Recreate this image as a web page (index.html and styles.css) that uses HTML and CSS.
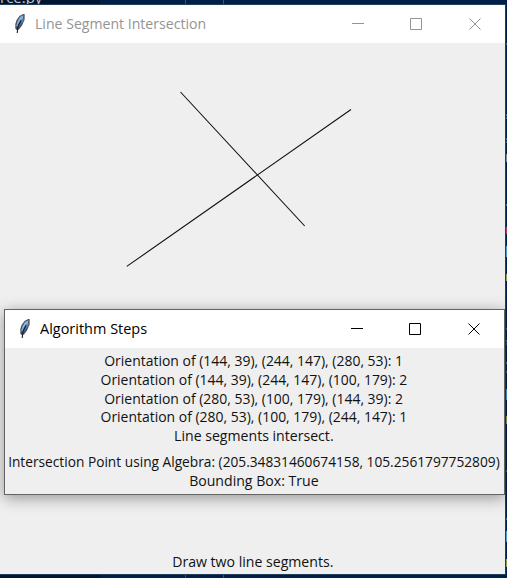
FILE: index.html
```
<!DOCTYPE html>
<html lang="en">
<head>
<meta charset="utf-8">
<title>Line Segment Intersection</title>
<link rel="stylesheet" href="styles.css">
</head>
<body>
<svg width="0" height="0" class="defs">
  <symbol id="feather" viewBox="0 0 14 22">
    <path d="M11.5 1 10.2 1 6.5 3 3.6 7 2.3 11 2.3 15.5 3.5 17 6 16.5 9 12.5 11.5 7Z" fill="#4a4e54"/>
    <path d="M10.3 2.2 7 4 4.6 8 3.2 13 5 14 9.4 9Z" fill="#82b4e4"/>
    <path d="M10 6 8 11 4.8 15 4.6 12 7.5 7Z" fill="#3977c0"/>
    <path d="M8 7.5 5 13.5 4.2 20" fill="none" stroke="#15191f" stroke-width="1.1"/>
    <path d="M11.2 1.2 11 6 9.5 9" fill="none" stroke="#77797b" stroke-width=".8"/>
  </symbol>
  <symbol id="controls" viewBox="0 0 130 12">
    <path d="M0 5.5h12M58.5.5h11v11h-11zM117.5.5l11 11M128.5.5l-11 11" fill="none" stroke="currentColor"/>
  </symbol>
</svg>
<div class="desktop">
  <div class="behind">rce.py</div>
  <svg class="edge" width="2" height="578">
    <path d="M0 44h2M0 118h2M0 142h2M0 329h2M0 344h2M0 372h2M0 471h2" stroke="#8093ad"/>
    <path d="M1 115h1M1 139h1M1 205h1M1 341h1M1 363h1M1 519h1" stroke="#2f68b5" stroke-width="2"/>
    <path d="M1.5 246v11M1.5 389v11M1.5 531v11" stroke="#4d9bd0"/>
    <path d="M1.5 154v8" stroke="#7e8790"/>
    <path d="M1.5 227v7" stroke="#b63b56"/>
    <path d="M1.5 274v7M1.5 416v8M1.5 559v8" stroke="#8b9d58"/>
  </svg>
  <main class="window">
    <header class="titlebar inactive">
      <svg class="feather"><use href="#feather"/></svg>
      <h1><span>Line Segment Intersection</span></h1>
      <svg class="controls"><use href="#controls"/></svg>
    </header>
    <svg class="canvas" width="505" height="505" viewBox="0 43 505 505">
      <path d="M180.5 92 304.7 226M126.8 266.4 351 109.5" fill="none" stroke="#111" stroke-width="1.1"/>
    </svg>
    <p class="status"><span>Draw two line segments.</span></p>
  </main>
  <section class="dialog">
    <header class="titlebar">
      <svg class="feather"><use href="#feather"/></svg>
      <h2><span>Algorithm Steps</span></h2>
      <svg class="controls"><use href="#controls"/></svg>
    </header>
    <div class="steps">
      <p><span>Orientation of (144, 39), (244, 147), (280, 53): 1</span></p>
      <p><span>Orientation of (144, 39), (244, 147), (100, 179): 2</span></p>
      <p><span>Orientation of (280, 53), (100, 179), (144, 39): 2</span></p>
      <p><span>Orientation of (280, 53), (100, 179), (244, 147): 1</span></p>
      <p class="words"><span>Line segments intersect.</span></p>
      <p class="result"><span>Intersection Point using Algebra: (205.34831460674158, 105.2561797752809)</span></p>
      <p class="words"><span>Bounding Box: True</span></p>
    </div>
  </section>
</div>
</body>
</html>
```
FILE: styles.css
```
* { box-sizing: border-box; margin: 0; }
body { background: #001f46; color: #111; font: 15px/19px "Open Sans", "Noto Sans", sans-serif; overflow: hidden; }
.defs { position: absolute; }
.desktop {
  position: relative; width: 507px; height: 578px; padding-top: 4px; overflow: hidden;
  background:
    linear-gradient(#39547a, #39547a) 185px 0 / 1px 578px no-repeat,
    linear-gradient(#39547a, #39547a) 223px 0 / 1px 578px no-repeat,
    linear-gradient(90deg, #00152f 100px, #001f46 100px);
}
.behind { position: absolute; left: 0; top: -12px; color: #c5c8cc; }
.edge { position: absolute; left: 505px; top: 0; }
.window {
  position: relative; display: flex; flex-direction: column; width: 506px; height: 571px;
  border: solid #233e5c; border-width: 1px 1px 1px 0; background: #efefef;
}
.titlebar { display: flex; align-items: center; height: 38px; flex: none; padding: 0 23px 0 13px; background: #fff; color: #000; }
.inactive { color: #949494; }
.feather { width: 14px; height: 22px; margin-top: -1px; }
.titlebar h1, .titlebar h2 { flex: 1; margin: -2px 0 0 8px; font-size: 15px; font-weight: 400; line-height: 20px; white-space: nowrap; }
.controls { width: 130px; height: 12px; }
.titlebar span { display: inline-block; transform: scaleX(.94); transform-origin: left; }
.titlebar h2 span { transform: scaleX(.965); }
.canvas { display: block; flex: none; }
.status { margin-top: 4px; text-align: center; }
.status span, .steps .words span { transform: scaleX(.94); }
.status span, .steps span { display: inline-block; white-space: nowrap; }
.steps span { transform: scaleX(.93); }
.steps .result span { transform: scaleX(.914); }
.dialog {
  position: absolute; left: 4px; top: 309px; width: 501px; height: 186px;
  border: 1px solid #646464; background: #efefef;
  box-shadow: 0 3px 14px rgba(0, 0, 0, .38);
}
.steps { display: flex; flex-direction: column; align-items: center; padding: 3px 1px 0 0; }
.steps p { height: 18.8px; line-height: 18.8px; }
.steps .result { margin-top: 7px; }
```
